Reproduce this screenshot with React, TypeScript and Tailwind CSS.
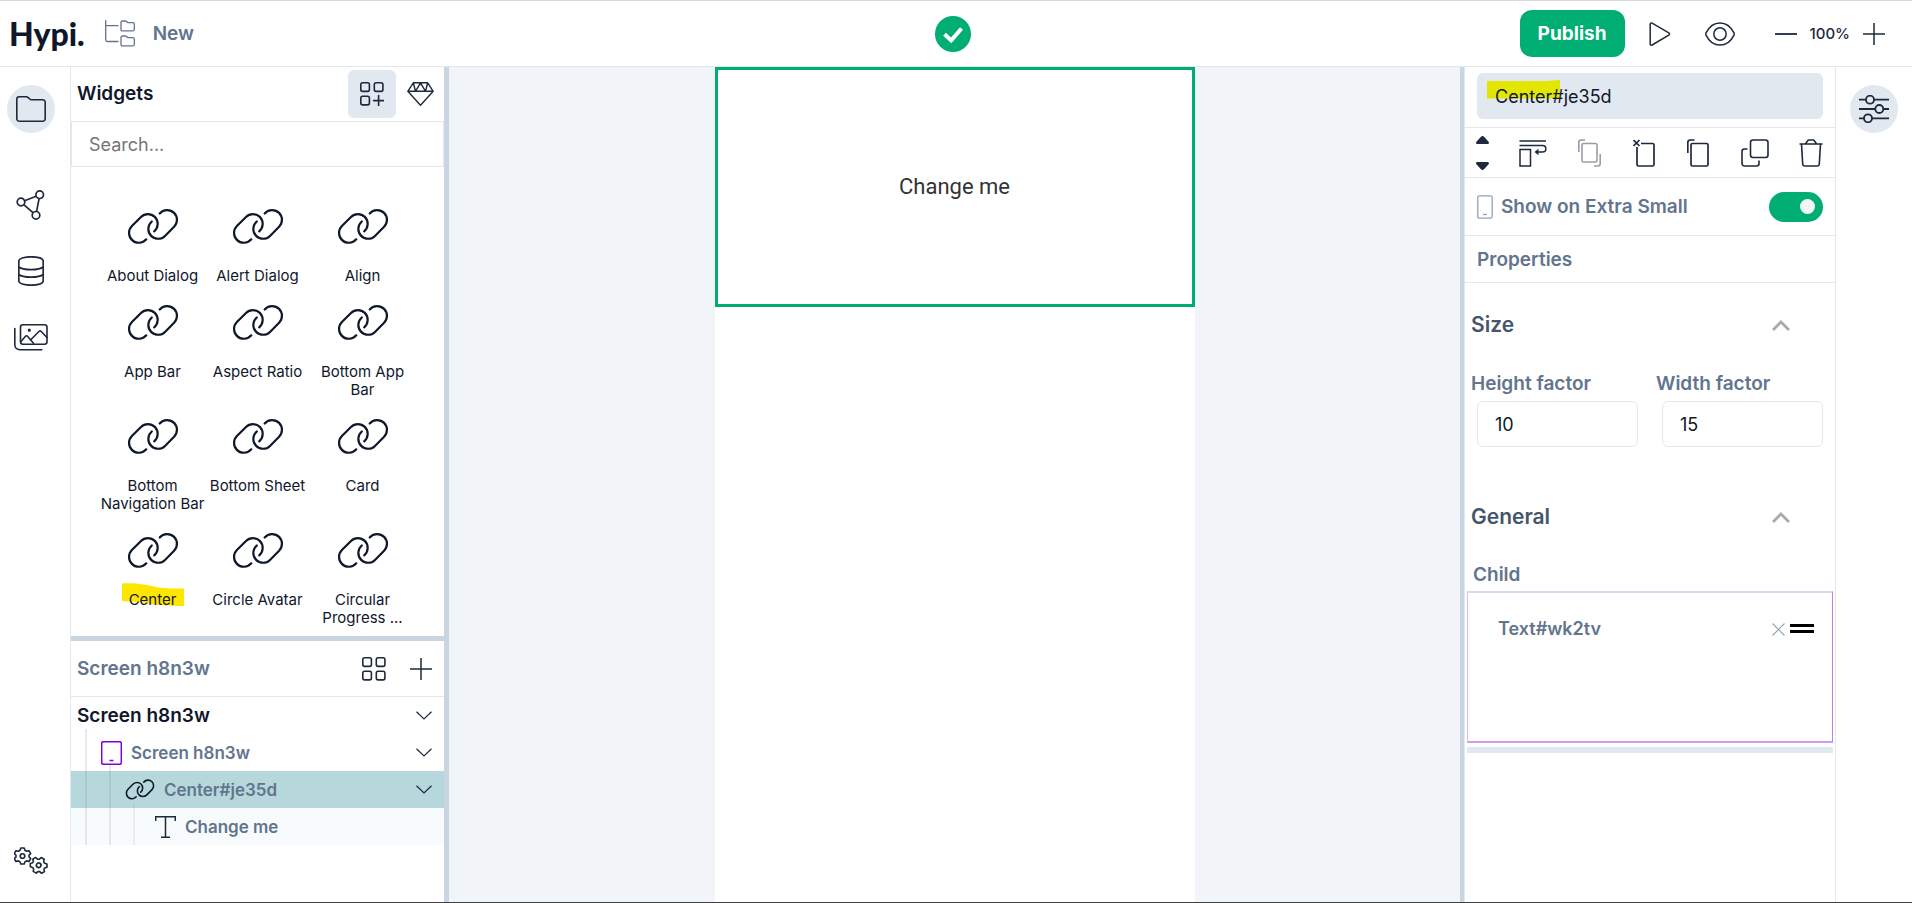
import React, { useState } from 'react';

interface IconProps {
    className?: string;
}

const CHAIN = 'M19.3 31.3A9.8 9.8 0 0 1 4.9 31.9A9.8 9.8 0 0 1 4.9 18.1L14 8.9A9.8 9.8 0 0 1 27.8 8.9A9.8 9.8 0 0 1 27.2 23.3';

const LinkIcon: React.FC<IconProps & { stroke?: number }> = ({ className, stroke = 2.2 }) => (
    <svg viewBox="0 0 52 37" className={className} fill="none" stroke="currentColor" strokeWidth={stroke} strokeLinecap="round">
        <path d={CHAIN} />
        <path d={CHAIN} transform="rotate(180 26 18.4)" />
    </svg>
);

const FolderTreeIcon: React.FC<IconProps> = ({ className }) => (
    <svg viewBox="0 0 30 27" className={className} fill="none" stroke="currentColor" strokeWidth="1.3" strokeLinejoin="round" strokeLinecap="round">
        <path d="M.7.7V20a1.5 1.5 0 0 0 1.5 1.5H13M.7 5.7H13" />
        <path d="M16 2.3A1.3 1.3 0 0 1 17.3 1h3.4l2.2 1.6h5.1a1.3 1.3 0 0 1 1.3 1.3v5.6a1.3 1.3 0 0 1-1.3 1.3H17.3A1.3 1.3 0 0 1 16 9.5z" />
        <path d="M16 17.3A1.3 1.3 0 0 1 17.3 16h3.4l2.2 1.6h5.1a1.3 1.3 0 0 1 1.3 1.3v5.6a1.3 1.3 0 0 1-1.3 1.3H17.3A1.3 1.3 0 0 1 16 24.5z" />
    </svg>
);

const FolderIcon: React.FC<IconProps> = ({ className }) => (
    <svg viewBox="0 0 30 26" className={className} fill="none" stroke="currentColor" strokeWidth="1.6" strokeLinejoin="round">
        <path d="M.8 3.3A2.5 2.5 0 0 1 3.3.8h6.8c.9 0 1.6.3 2.2.9l1.4 1.3c.5.5 1.2.8 1.9.8h11.1A2.5 2.5 0 0 1 29.2 6.3v16.4a2.5 2.5 0 0 1-2.5 2.5H3.3A2.5 2.5 0 0 1 .8 22.7z" />
    </svg>
);

const NodesIcon: React.FC<IconProps> = ({ className }) => (
    <svg viewBox="0 0 30 30" className={className} fill="none" stroke="currentColor" strokeWidth="1.7">
        <circle cx="23.7" cy="4.7" r="3.8" />
        <circle cx="5" cy="12" r="3.8" />
        <circle cx="20" cy="25.3" r="3.8" />
        <path d="M8.6 10.7l11.5-4.5M7.8 14.6l9.4 8.2M23.1 8.600l-2.5 12.8" />
    </svg>
);

const DatabaseIcon: React.FC<IconProps> = ({ className }) => (
    <svg viewBox="0 0 26 30" className={className} fill="none" stroke="currentColor" strokeWidth="1.7">
        <path d="M.8 5C.8 2.5 6 .8 13 .8S25.2 2.5 25.2 5v20c0 2.5-5.2 4.2-12.2 4.2S.8 27.5.8 25z" />
        <path d="M.8 11c2 1.7 6.8 2.6 12.2 2.6S23.2 12.700 25.2 11M.8 18.500c2 1.7 6.8 2.6 12.2 2.6s10.2-.9 12.2-2.6" />
    </svg>
);

const ImagesIcon: React.FC<IconProps> = ({ className }) => (
    <svg viewBox="0 0 34 27" className={className} fill="none" stroke="currentColor" strokeWidth="1.6" strokeLinecap="round" strokeLinejoin="round">
        <rect x="6.5" y=".8" width="26.5" height="19.5" rx="2.5" />
        <path d="M.8 4.5v16c0 3 2 5.2 5 5.200h22" />
        <path d="M7 17.5l4.5-5.2c.6-.7 1.4-.7 2 0l6 7M16.500 16l8.7-8.7c.6-.6 1.300-.6 1.8 0l6 6.2" />
        <circle cx="15.3" cy="6.2" r=".8" fill="currentColor" />
    </svg>
);

const GEAR = 'M-1.7-8h3.4l.7 2.3 1.7 1 2.4-.6L8.2-2.4 6.5-.7v1.6l1.7 1.7-1.700 2.900-2.400-.6-1.700 1L1.700 8h-3.400l-.7-2.100-1.700-1-2.400.6-1.700-2.900L-6.500.9V-.7l-1.700-1.700 1.700-2.900 2.400.6 1.700-1z';

const GearsIcon: React.FC<IconProps> = ({ className }) => (
    <svg viewBox="0 0 34 27" className={className} fill="none" stroke="currentColor" strokeWidth="1.6" strokeLinejoin="round">
        <g transform="translate(8.5 9)">
            <path d={GEAR} />
            <circle r="2.3" />
        </g>
        <g transform="translate(24.7 18.3) rotate(30)">
            <path d={GEAR} />
            <circle r="2.3" />
        </g>
    </svg>
);

const GridIcon: React.FC<IconProps & { plus?: boolean }> = ({ className, plus }) => (
    <svg viewBox="0 0 24 24" className={className} fill="none" stroke="currentColor" strokeWidth="1.6" strokeLinecap="round">
        <rect x=".8" y=".8" width="8.6" height="8.6" rx="1.8" />
        <rect x="14.3" y=".8" width="8.6" height="8.6" rx="1.8" />
        <rect x=".8" y="14.3" width="8.6" height="8.6" rx="1.8" />
        {plus ? <path d="M18.6 13.6v10M13.6 18.6h10" /> : <rect x="14.3" y="14.3" width="8.6" height="8.6" rx="1.8" />}
    </svg>
);

const DiamondIcon: React.FC<IconProps> = ({ className }) => (
    <svg viewBox="0 0 27 24" className={className} fill="none" stroke="currentColor" strokeWidth="1.4" strokeLinejoin="round">
        <path d="M6.3.8h14.4l5.5 8.5L13.5 23.2.8 9.300zM.8 9.300h25.4M6.3.8l2.2 8.5 5-8.500 5 8.500 2.200-8.500" />
    </svg>
);

const PlusIcon: React.FC<IconProps> = ({ className }) => (
    <svg viewBox="0 0 22 22" className={className} stroke="currentColor" strokeWidth="1.5">
        <path d="M11 0v22M0 11h22" />
    </svg>
);

const ChevronDown: React.FC<IconProps> = ({ className }) => (
    <svg viewBox="0 0 16 9" className={className} fill="none" stroke="currentColor" strokeWidth="1.2">
        <path d="M.5.7 8 8 15.5.7" />
    </svg>
);

const ChevronUp: React.FC<IconProps> = ({ className }) => (
    <svg viewBox="0 0 18 11" className={className} fill="none" stroke="currentColor" strokeWidth="2.8">
        <path d="M1 10 9 2l8 8" />
    </svg>
);

const RAIL_ITEMS = [
    { label: 'Data model', icon: <NodesIcon className="h-[30px] w-[30px]" /> },
    { label: 'Database', icon: <DatabaseIcon className="h-[30px] w-[26px]" /> },
    { label: 'Media', icon: <ImagesIcon className="h-[27px] w-[34px]" /> },
];

const WIDGETS = [
    'About Dialog', 'Alert Dialog', 'Align',
    'App Bar', 'Aspect Ratio', 'Bottom App Bar',
    'Bottom Navigation Bar', 'Bottom Sheet', 'Card',
    'Center', 'Circle Avatar', 'Circular Progress ...',
];

const TopBar: React.FC = () => (
    <header className="flex h-[67px] shrink-0 items-center justify-between border-t border-b border-t-[#d9d9d9] border-b-slate-200 pr-[15px] pl-[9px]">
        <div className="flex flex-1 items-center">
            <a href="#" className="font-['Lato',sans-serif] text-[32px] leading-10 font-black">Hypi.</a>
            <a href="#" className="ml-5 flex items-center gap-[18px] text-slate-500">
                <FolderTreeIcon className="h-[27px] w-[30px]" />
                <span className="text-[19px] leading-7 font-semibold">New</span>
            </a>
        </div>
        <svg viewBox="0 0 36 36" className="h-9 w-9">
            <circle cx="18" cy="18" r="18" fill="#00ad72" />
            <path d="M9.5 18.2l6.7 6.2L26.5 12.5" fill="none" stroke="#fff" strokeWidth="4" />
        </svg>
        <div className="flex flex-1 items-center justify-end text-slate-800">
            <button className="h-[47px] rounded-xl bg-[#00ad72] px-[18px] text-[19px] leading-7 font-bold text-white">Publish</button>
            <button aria-label="Run" className="ml-6">
                <svg viewBox="0 0 22 24" className="h-6 w-[22px]" fill="none" stroke="currentColor" strokeWidth="1.5" strokeLinejoin="round">
                    <path d="M1.2 2.2c0-1.1 1-1.6 1.900-1.100l16.700 9.700c.9.500.9 1.700 0 2.300L3.100 23c-.9.500-1.900 0-1.900-1.100z" />
                </svg>
            </button>
            <button aria-label="Preview" className="ml-[34px]">
                <svg viewBox="0 0 30 24" className="h-6 w-[30px]" fill="none" stroke="currentColor" strokeWidth="1.5">
                    <path d="M1 10.900C3.800 5.200 8.800.9 15 .9s11.200 4.300 14 10c.3.700.3 1.500 0 2.200-2.800 5.700-7.800 10-14 10S3.800 18.800 1 13.100c-.3-.7-.3-1.500 0-2.200z" />
                    <circle cx="15" cy="12" r="6.2" />
                </svg>
            </button>
            <button aria-label="Zoom out" className="ml-10">
                <svg viewBox="0 0 22 22" className="h-[22px] w-[22px]" stroke="currentColor" strokeWidth="1.8">
                    <path d="M0 11h22" />
                </svg>
            </button>
            <span className="mx-[13px] text-[15px] leading-6 font-medium">100%</span>
            <button aria-label="Zoom in" className="mr-3">
                <PlusIcon className="h-[22px] w-[22px]" />
            </button>
        </div>
    </header>
);

const LeftRail: React.FC = () => (
    <nav className="flex w-[71px] shrink-0 flex-col items-center border-r border-slate-200 pt-[18px] pr-2 pb-7 text-slate-800">
        <button aria-label="Project" className="flex h-12 w-12 items-center justify-center rounded-full bg-slate-200">
            <FolderIcon className="h-[26px] w-[30px]" />
        </button>
        <div className="mt-[39px] flex flex-col items-center">
            {RAIL_ITEMS.map((item) => (
                <button key={item.label} aria-label={item.label} className="flex h-[66px] w-12 items-center justify-center">
                    {item.icon}
                </button>
            ))}
        </div>
        <button aria-label="Settings" className="mt-auto">
            <GearsIcon className="h-[27px] w-[34px]" />
        </button>
    </nav>
);

const WidgetPanel: React.FC = () => (
    <section className="flex min-h-0 flex-1 flex-col">
        <div className="flex h-[54px] shrink-0 items-center pr-[10px] pl-[6px]">
            <h2 className="flex-1 text-[19px] leading-7 font-semibold">Widgets</h2>
            <button aria-label="Add widget" className="flex h-12 w-12 items-center justify-center rounded-md bg-slate-200 text-slate-800">
                <GridIcon plus className="h-6 w-6" />
            </button>
            <button aria-label="Premium" className="ml-[11px] text-slate-800">
                <DiamondIcon className="h-6 w-[27px]" />
            </button>
        </div>
        <input
            aria-label="Search widgets"
            placeholder="Search..."
            className="h-[46px] shrink-0 border border-slate-200 px-[17px] text-lg outline-none placeholder:text-[#757575]"
        />
        <div className="mt-[34px] grid min-h-0 grid-cols-[repeat(3,105px)] content-start justify-center gap-y-3 overflow-hidden">
            {WIDGETS.map((name) => (
                <button key={name} className="flex flex-col items-center gap-4">
                    <span className="flex h-[50px] items-center">
                        <LinkIcon className="h-[37px] w-[52px]" />
                    </span>
                    <span className="relative text-[15px] leading-[18px]">
                        {name === 'Center' && (
                            <svg viewBox="0 0 62 23" className="absolute -top-2 -left-[7px] h-[23px] w-[62px] max-w-none">
                                <path d="M0 .5C15-.3 23 1.5 36 4.500 45 5.500 55 5.500 62 5.500V23C48 22.800 34 22.500 24 20 15 18.500 8 19 0 18z" fill="#ffe600" />
                            </svg>
                        )}
                        <span className="relative">{name}</span>
                    </span>
                </button>
            ))}
        </div>
    </section>
);

const TREE = [
    { label: 'Screen h8n3w', row: 'pl-[6px] text-[19px] leading-7', open: true },
    {
        label: 'Screen h8n3w',
        row: 'pl-[30px] gap-[9px] text-[17px] leading-7 text-slate-500',
        open: true,
        icon: (
            <svg viewBox="0 0 21 24" className="h-6 w-[21px] text-[#7e00e0]" fill="none" stroke="currentColor" strokeWidth="1.5">
                <rect x=".7" y=".7" width="19.6" height="22.6" rx="1.8" />
                <path d="M8.5 19.5h4" />
            </svg>
        ),
    },
    {
        label: 'Center#je35d',
        row: 'pl-[54px] gap-[9px] bg-[#b6d8dc] text-[17px] leading-7 text-slate-500',
        open: true,
        icon: <LinkIcon stroke={2.8} className="h-[21px] w-[30px] text-slate-900" />,
    },
    {
        label: 'Change me',
        row: 'pl-[84px] gap-[9px] bg-[#f7fbfc] text-[17px] leading-7 text-slate-500',
        open: false,
        icon: (
            <svg viewBox="0 0 21 22" className="h-[22px] w-[21px] text-slate-800" fill="none" stroke="currentColor" strokeWidth="1.5">
                <path d="M.7 5V.8h19.6V5M10.5.8v20.4M6 21.2h9" />
            </svg>
        ),
    },
];

const ScreenTree: React.FC = () => (
    <section className="h-[266px] shrink-0 border-t-[5px] border-slate-300">
        <div className="flex h-14 items-center border-b border-slate-200 pr-3 pl-[6px] text-slate-800">
            <h2 className="flex-1 text-[19px] leading-7 font-semibold text-slate-500">Screen h8n3w</h2>
            <button aria-label="Layout">
                <GridIcon className="h-6 w-6" />
            </button>
            <button aria-label="Add screen" className="ml-6">
                <PlusIcon className="h-[22px] w-[22px]" />
            </button>
        </div>
        <ul className="relative font-semibold">
            {TREE.map((node, i) => (
                <li key={i} className={`flex h-[37px] items-center pr-3 ${node.row}`}>
                    {node.icon}
                    <span className="flex-1">{node.label}</span>
                    {node.open && (
                        <button aria-label={`Collapse ${node.label}`} className="text-slate-800">
                            <ChevronDown className="h-[9px] w-4" />
                        </button>
                    )}
                </li>
            ))}
            {/* indent guides */}
            <span className="absolute top-8 bottom-0 left-[14px] w-[2px] bg-slate-500/15" />
            <span className="absolute top-[68px] bottom-0 left-[38px] w-[2px] bg-slate-500/15" />
            <span className="absolute top-[107px] bottom-0 left-[62px] w-[2px] bg-slate-500/10" />
        </ul>
    </section>
);

const Toolbar: React.FC = () => (
    <div className="flex h-[51px] items-center justify-between border-y border-slate-200 pr-3 pl-[11px] text-slate-800">
        <div className="flex flex-col gap-[18px]">
            <button aria-label="Move up">
                <svg viewBox="0 0 13 8" className="h-2 w-[13px]" fill="currentColor"><path d="M5 .8c.9-1 2.1-1 3 0l4.6 5c.8.9.2 2.2-1 2.2H1.4C.2 8-.4 6.7.4 5.8z" /></svg>
            </button>
            <button aria-label="Move down">
                <svg viewBox="0 0 13 8" className="h-2 w-[13px]" fill="currentColor"><path d="M5 7.2c.9 1 2.1 1 3 0l4.6-5c.8-.9.2-2.2-1-2.2H1.4C.2 0-.4 1.3.4 2.2z" /></svg>
            </button>
        </div>
        <button aria-label="Wrap">
            <svg viewBox="0 0 28 28" className="h-7 w-7" fill="none" stroke="currentColor" strokeWidth="1.5">
                <path d="M.5 2H27M.5 6.5h23c4.500 0 4.500 6.500 0 6.500H18" />
                <path d="M19.500 9.700 15.500 13l4 3.300z" fill="currentColor" stroke="none" />
                <rect x="1" y="10.5" width="10.5" height="16.5" />
            </svg>
        </button>
        <button aria-label="Paste style" disabled className="flex w-6 justify-center opacity-45">
            <svg viewBox="0 0 23 28" className="h-7 w-[23px]" fill="none" stroke="currentColor" strokeWidth="1.6">
                <rect x="4" y="4.5" width="15" height="18.5" rx="1.5" />
                <path d="M.8 13V3.500C.8 2 1.800 1 3.300 1H7M22.200 15v9.500c0 1.500-1 2.500-2.500 2.500H16" />
            </svg>
        </button>
        <button aria-label="Cut" className="flex w-6 justify-center">
            <svg viewBox="0 0 22 28" className="h-7 w-[22px]" fill="none" stroke="currentColor" strokeWidth="1.7">
                <path d="M8 4.500h11.500A1.500 1.500 0 0 1 21 6v19.500a1.500 1.500 0 0 1-1.500 1.500h-14A1.500 1.500 0 0 1 4 25.500V8M.5 1l6 6M6.500 1l-6 6" />
            </svg>
        </button>
        <button aria-label="Copy" className="flex w-6 justify-center">
            <svg viewBox="0 0 22 28" className="h-7 w-[22px]" fill="none" stroke="currentColor" strokeWidth="1.7">
                <rect x="4" y="4.5" width="17" height="22.5" rx="1.5" />
                <path d="M.8 14V3.500C.8 2 1.800 1 3.300 1H7.500" />
            </svg>
        </button>
        <button aria-label="Duplicate">
            <svg viewBox="0 0 28 28" className="h-7 w-7" fill="none" stroke="currentColor" strokeWidth="1.6">
                <rect x="9.5" y="1" width="17.5" height="17.5" rx="2.5" />
                <path d="M6.500 10H3.500A2.500 2.500 0 0 0 1 12.500v12A2.500 2.500 0 0 0 3.500 27h12a2.500 2.500 0 0 0 2.500-2.500v-3" />
            </svg>
        </button>
        <button aria-label="Delete">
            <svg viewBox="0 0 24 28" className="h-7 w-6" fill="none" stroke="currentColor" strokeWidth="1.6">
                <path d="M.5 5h23M2.500 5l1.200 20c.1 1.200 1 2 2.200 2h12.200c1.200 0 2.100-.8 2.200-2L21.500 5M6.500 5l2-3.200C8.800 1.300 9.300 1 10 1h4c.7 0 1.200.3 1.500.8l2 3.200" />
            </svg>
        </button>
    </div>
);

const Section: React.FC<{ title: string; children: React.ReactNode }> = ({ title, children }) => {
    const [open, setOpen] = useState(true);
    return (
        <div className="mb-7">
            <button onClick={() => setOpen(!open)} className="flex h-[84px] w-full items-center justify-between pr-[45px] pl-[6px]">
                <span className="text-[21px] leading-8 font-semibold text-slate-600">{title}</span>
                <ChevronUp className="h-[11px] w-[18px] text-[#a8a8ae]" />
            </button>
            {open && children}
        </div>
    );
};

const FactorField: React.FC<{ id: string; label: string; value: string }> = ({ id, label, value }) => (
    <div className="flex-1 pr-3">
        <label htmlFor={id} className="block pl-[6px] text-[19px] leading-[34px] font-semibold text-slate-500">{label}</label>
        <input id={id} defaultValue={value} className="ml-3 block h-[46px] w-[calc(100%-12px)] rounded-md border border-slate-200 px-[17px] text-lg outline-none" />
    </div>
);

const Inspector: React.FC = () => (
    <aside className="flex w-[372px] shrink-0 flex-col border-x border-slate-200">
        <div className="px-3 pt-[6px] pb-2">
            <div className="relative rounded-md bg-slate-200">
                <svg viewBox="0 0 73 19" className="absolute top-[7px] left-[10px] h-[19px] w-[73px]">
                    <path d="M0 1h60L73 0v18.500H0z" fill="#e2e600" />
                </svg>
                <input aria-label="Name" defaultValue="Center#je35d" className="relative block h-[46px] w-full bg-transparent px-[18px] text-lg outline-none" />
            </div>
        </div>
        <Toolbar />
        <div className="flex h-[58px] items-center border-b border-slate-200 px-3 text-[19px] leading-7 font-semibold text-slate-500">
            <svg viewBox="0 0 16 24" className="mr-2 h-6 w-4 text-slate-400" fill="none" stroke="currentColor" strokeWidth="1.3">
                <rect x=".8" y=".8" width="14.4" height="22.4" rx="1.8" />
                <path d="M6 19.5h4" />
            </svg>
            <label htmlFor="show-xs" className="flex-1">Show on Extra Small</label>
            <input
                id="show-xs"
                type="checkbox"
                defaultChecked
                className="flex h-[30px] w-[54px] appearance-none items-center rounded-full bg-slate-300 px-2 before:h-[15px] before:w-[15px] before:rounded-full before:bg-slate-100 checked:justify-end checked:bg-[#00ad72]"
            />
        </div>
        <h2 className="border-b border-slate-200 px-3 pt-[10px] pb-2 text-[19px] leading-7 font-semibold text-slate-500">Properties</h2>
        <Section title="Size">
            <div className="flex">
                <FactorField id="height-factor" label="Height factor" value="10" />
                <FactorField id="width-factor" label="Width factor" value="15" />
            </div>
        </Section>
        <Section title="General">
            <h3 className="pl-2 text-[19px] leading-8 font-semibold text-slate-500">Child</h3>
            <div className="mx-[2px] flex h-[152px] items-start border-x border-y-2 border-t-[#ddd6f0] border-r-[#bd7fec] border-b-[#cb9cf2] border-l-[#d8bdf0] pt-[22px] pr-[18px] pl-[30px]">
                <span className="flex-1 text-lg font-semibold text-slate-500">Text#wk2tv</span>
                <button aria-label="Remove child" className="mt-2 text-slate-400">
                    <svg viewBox="0 0 13 13" className="h-[13px] w-[13px]" stroke="currentColor" strokeWidth="1.1"><path d="M.5.5l12 12M12.5.5l-12 12" /></svg>
                </button>
                <button aria-label="Drag child" className="mt-[9px] ml-[5px] flex w-6 flex-col gap-[3px]">
                    <span className="h-[3px] w-full bg-black" />
                    <span className="h-[3px] w-full bg-black" />
                </button>
            </div>
            <div className="mx-[2px] mt-1 h-[6px] bg-slate-200" />
        </Section>
    </aside>
);

export default function App() {
    return (
        <div className="flex h-screen flex-col overflow-hidden border-b border-[#404040] bg-white font-['Inter',sans-serif] text-slate-900">
            <TopBar />
            <div className="flex min-h-0 flex-1">
                <LeftRail />
                <div className="flex w-[373px] shrink-0 flex-col">
                    <WidgetPanel />
                    <ScreenTree />
                </div>
                <div className="w-[5px] shrink-0 bg-slate-300" />
                <main className="flex flex-1 justify-center bg-slate-100">
                    <div className="w-full max-w-[480px] bg-white">
                        <div className="flex h-60 items-center justify-center border-3 border-[#00ad72] font-['Roboto',sans-serif] text-[22px] leading-8 text-[#333]">
                            Change me
                        </div>
                    </div>
                </main>
                <div className="w-1 shrink-0 bg-slate-300" />
                <Inspector />
                <nav className="flex w-[76px] shrink-0 justify-center pt-[18px]">
                    <button aria-label="Properties panel" className="flex h-12 w-12 items-center justify-center rounded-full bg-slate-200">
                        <svg viewBox="0 0 30 28" className="h-7 w-[30px] text-slate-800" fill="none" stroke="currentColor" strokeWidth="1.8">
                            <path d="M0 4.7h7M15 4.7h15M0 14h16.3M24.3 14H30M0 23.3h5M13 23.3h17" />
                            <circle cx="11" cy="4.7" r="4" />
                            <circle cx="20.3" cy="14" r="4" />
                            <circle cx="9" cy="23.3" r="4" />
                        </svg>
                    </button>
                </nav>
            </div>
        </div>
    );
}
